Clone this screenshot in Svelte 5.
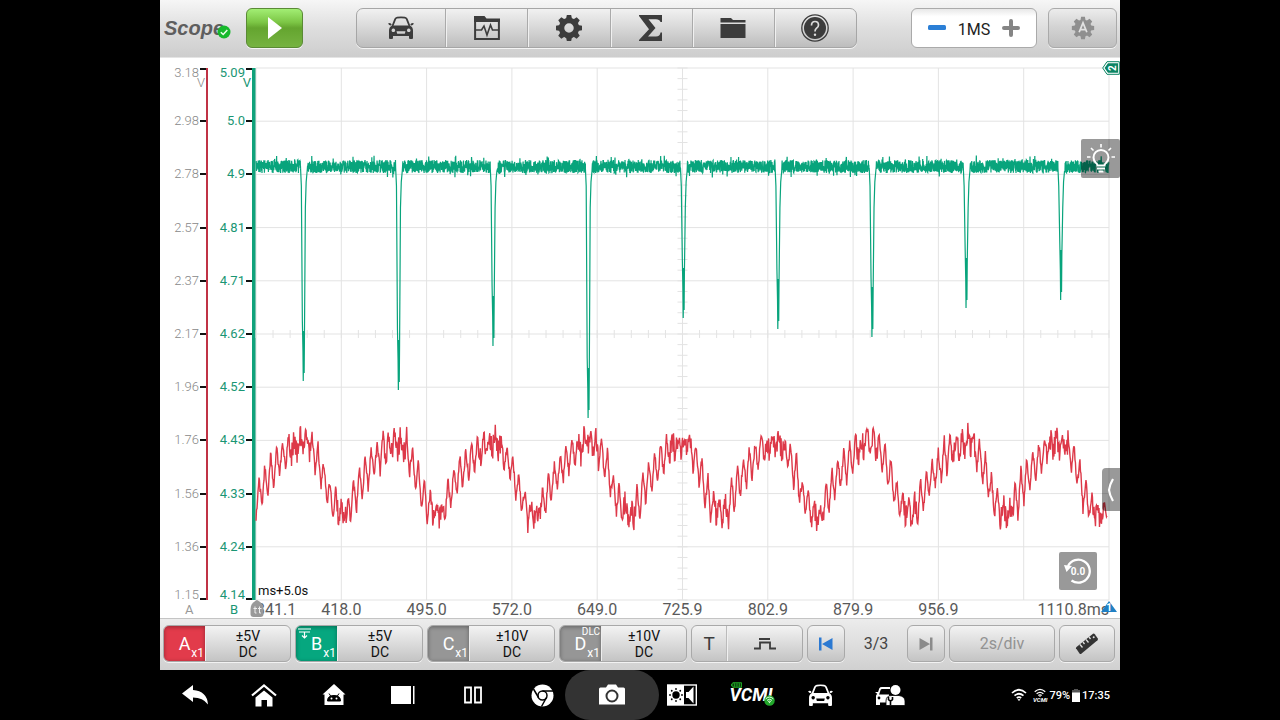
<script>
  const axisA = ['3.18', '2.98', '2.78', '2.57', '2.37', '2.17', '1.96', '1.76', '1.56', '1.36', '1.15'];
  const axisB = ['5.09', '5.0', '4.9', '4.81', '4.71', '4.62', '4.52', '4.43', '4.33', '4.24', '4.14'];
  const times = ['341.1', '418.0', '495.0', '572.0', '649.0', '725.9', '802.9', '879.9', '956.9', '1110.8ms'];
  const channels = [
    { name: 'A', range: '±5V', tone: 'red' },
    { name: 'B', range: '±5V', tone: 'green', filter: true },
    { name: 'C', range: '±10V', tone: 'gray' },
    { name: 'D', range: '±10V', tone: 'gray', tag: 'DLC' }
  ];
  const tools = ['Vehicle', 'Waveforms', 'Settings', 'Math', 'Files', 'Help'];
  const navItems = ['Back', 'Home', 'Android home', 'Recent apps', 'Split screen', 'Chrome', 'Screenshot', 'Display and sound', 'VCMI', 'Vehicle', 'Remote expert'];

  const W = 852;
  const H = 532;

  function random(seed) {
    let s = seed;
    return () => {
      s = (s * 1664525 + 1013904223) % 4294967296;
      return s / 4294967296;
    };
  }

  // Channel B: noisy supply level with a deep dip at every coil event.
  const dips = [[47.5, 313], [142.5, 322], [237, 278], [332, 350], [427, 250], [521.5, 261], [615.5, 269], [709.5, 240], [804, 232]];
  function supplyTrace() {
    const rnd = random(11);
    const pts = [];
    let next = 0;
    for (let x = 0; x <= W; x += 0.2) {
      const dip = dips[next];
      if (dip && x > dip[0] - 3) {
        const [c, d] = dip;
        pts.push([c - 3, 100], [c - 2.2, 118], [c - 1.2, d - 60], [c - 0.6, d - 30], [c - 0.3, d], [c + 0.2, d - 50], [c + 0.6, d - 8], [c + 0.9, d - 45], [c + 1.8, 140], [c + 2.6, 114], [c + 3.6, 103]);
        x = c + 4;
        next += 1;
      }
      const spread = rnd() < 0.05 ? 22 : 13;
      pts.push([x, 98.5 + (rnd() - 0.5) * spread]);
    }
    return pts;
  }

  // Channel A: slow ripple carrying a faster saw-like one.
  const troughs = [-8, 88, 181, 279, 374, 465, 561, 654, 751, 842, 938];
  const shape = [[0, 447], [0.06, 440], [0.13, 424], [0.21, 409], [0.32, 394], [0.43, 381], [0.54, 375], [0.62, 375], [0.69, 386], [0.77, 404], [0.84, 427], [0.92, 440], [1, 447]];
  function rippleTrace() {
    const rnd = random(5);
    const pts = [];
    let swing = 16;
    let cycle = -1;
    for (let x = 0; x <= 850; x += 0.5) {
      let i = 0;
      while (troughs[i + 1] <= x) i += 1;
      const p = (x - troughs[i]) / (troughs[i + 1] - troughs[i]);
      let k = 0;
      while (shape[k + 1][0] < p) k += 1;
      const [p0, y0] = shape[k];
      const [p1, y1] = shape[k + 1];
      const base = y0 + ((y1 - y0) * (p - p0)) / (p1 - p0);
      const flat = (p > 0.42 && p < 0.66) || p < 0.06 || p > 0.93;
      const phase = (x / 5.9) % 1;
      if (Math.floor(x / 5.9) !== cycle) {
        cycle = Math.floor(x / 5.9);
        swing = 14 + rnd() * 8;
      }
      const saw = phase < 0.5 ? 1 - phase * 4 : phase * 4 - 3;
      pts.push([x, base + saw * (flat ? 9 : swing) + (rnd() - 0.5) * (flat ? 23 : 9)]);
    }
    return pts;
  }

  const toPoints = (pts) => pts.map(([x, y]) => `${x.toFixed(2)},${y.toFixed(1)}`).join(' ');
  const greenPoints = toPoints(supplyTrace());
  const redPoints = toPoints(rippleTrace());

  const steps = Array.from({ length: 11 }, (_, i) => i);
  const minor = Array.from({ length: 51 }, (_, i) => i);
  const teeth = [0, 45, 90, 135, 180, 225, 270, 315];
</script>

{#snippet car()}
  <svg class="car" viewBox="0 0 26 23" aria-hidden="true">
    <path d="M4.5 10 7.2 3.2Q7.8 1.8 9.2 1.6 13 1 16.8 1.6 18.2 1.8 18.8 3.2L21.5 10" fill="none" stroke="currentColor" stroke-width="1.8" />
    <path d="M0 7.5Q2.5 6 3.7 8.5L2.8 9.5Q1 9.5 0 7.5zM26 7.5Q23.5 6 22.3 8.5L23.2 9.5Q25 9.5 26 7.5z" fill="currentColor" />
    <path fill="currentColor" fill-rule="evenodd" d="M4 9.5H22Q25 11 25 14.5V22Q25 23 24 23H22Q21 23 21 22V20H5V22Q5 23 4 23H2Q1 23 1 22V14.5Q1 11 4 9.5zM5.3 12.5a1.8 1.8 0 1 0 .1 0zM20.7 12.5a1.8 1.8 0 1 0 .1 0zM8.5 15.2 9.2 17.8H16.8L17.5 15.2z" />
  </svg>
{/snippet}

{#snippet gear()}
  {#each teeth as a}
    <path d="M-3-9 -2.2-13H2.2L3-9z" transform="rotate({a})" />
  {/each}
{/snippet}

{#snippet wifi()}
  <path d="M1 5Q8-1.5 15 5M3.5 7.7Q8 3.8 12.5 7.7M5.8 10Q8 8.3 10.2 10" fill="none" stroke="currentColor" stroke-width="1.7" />
  <path d="M6.5 11.5Q8 10.3 9.5 11.5L8 13z" fill="currentColor" />
{/snippet}

<div class="device">
  <header class="topbar">
    <div class="brand">
      <h1>Scope</h1>
      <svg class="ok" viewBox="0 0 14 14" aria-hidden="true"><circle cx="7" cy="7" r="6.5" fill="#16b92c" /><path d="M3.8 7.2 6.2 9.5 10.3 5" fill="none" stroke="#eaffea" stroke-width="1.5" /></svg>
    </div>
    <button class="play" aria-label="Run"><svg viewBox="0 0 14 22" aria-hidden="true"><path d="M0 0 14 11 0 22z" fill="#fff" /></svg></button>

    <div class="tools">
      {#each tools as tool, i}
        <button aria-label={tool}>
          {#if i === 0}
            {@render car()}
          {:else if i === 1}
            <svg width="26" height="26" viewBox="0 0 26 26" aria-hidden="true"><path d="M0 1H10.5L12.5 3.5H26V7H0z" fill="currentColor" /><path d="M1.100 5V23.900H24.900V5" fill="none" stroke="currentColor" stroke-width="2" /><path d="M2 15H7.5L10 11 13 20 16.5 10 18.5 15H24" fill="none" stroke="currentColor" stroke-width="1.6" /></svg>
          {:else if i === 2}
            <svg width="28" height="28" viewBox="-14 -14 28 28" fill="currentColor" aria-hidden="true"><circle r="7.5" fill="none" stroke="currentColor" stroke-width="5.5" />{@render gear()}</svg>
          {:else if i === 3}
            <svg width="24" height="26" viewBox="0 0 24 26" aria-hidden="true"><path d="M0 0H23V7H21.5Q20.5 4.300 17 4.300H9.5L16.5 13 9 21.5H17Q21 21.5 21.5 17.5H23V26H0V25L10 14.200 0 1z" fill="currentColor" /></svg>
          {:else if i === 4}
            <svg width="26" height="22" viewBox="0 0 26 22" aria-hidden="true"><path d="M.5 1H11L13 3H25.5V5.5H.5zM.5 7H25.5V21H.5z" fill="currentColor" /></svg>
          {:else}
            <svg width="28" height="28" viewBox="0 0 28 28" aria-hidden="true"><circle cx="14" cy="14" r="13.2" fill="none" stroke="currentColor" stroke-width="1.3" /><circle cx="14" cy="14" r="11" fill="currentColor" /><path d="M10.5 11.5Q10.5 7.5 14 7.5T17.5 11Q17.5 13 15.5 14.2 14 15.2 14 17.5" fill="none" stroke="#ddd" stroke-width="1.7" /><circle cx="14" cy="20.8" r="1.2" fill="#ddd" /></svg>
          {/if}
        </button>
      {/each}
    </div>

    <div class="samples">
      <button aria-label="Fewer samples"><svg width="18" height="6" viewBox="0 0 18 6" aria-hidden="true"><rect width="18" height="5" rx="1.5" fill="#2b7fd6" /></svg></button>
      <output>1MS</output>
      <button aria-label="More samples"><svg width="18" height="18" viewBox="0 0 18 18" aria-hidden="true"><path d="M9 2V16M2 9H16" stroke="#858585" stroke-width="4" stroke-linecap="round" /></svg></button>
    </div>
    <button class="auto" aria-label="Auto setup">
      <svg width="24" height="24" viewBox="-14 -14 28 28" aria-hidden="true"><g fill="#8f8f8f"><circle r="10" />{@render gear()}</g><path d="M-4.5 5 0-6 4.5 5M-3 2H3" fill="none" stroke="#e2e2e2" stroke-width="2" /></svg>
    </button>
  </header>

  <main class="scope">
    <div class="axis axis-a">
      {#each axisA as value, i}
        <div class="mark"><span>{value}</span><i></i>{#if i === 0}<b class="unit">V</b>{/if}</div>
      {/each}
    </div>
    <div class="axis axis-b">
      {#each axisB as value, i}
        <div class="mark"><span>{value}</span><i></i>{#if i === 0}<b class="unit">V</b>{/if}</div>
      {/each}
    </div>
    <div class="plot">
      <svg class="chart" viewBox="0 0 {W} {H}" preserveAspectRatio="none" role="img" aria-label="Waveforms of channels A and B">
        <g class="grid">
          {#each steps as n}
            <path d="M{n * 85.2} 0V{H}M0 {n * 53.2}H{W}" />
          {/each}
          {#each minor as n}
            <path d="M{n * 17.04} 262V270M421 {n * 10.64}H431" />
          {/each}
        </g>
        <polyline class="green" points={greenPoints} />
        <polyline class="red" points={redPoints} />
      </svg>
      <span class="offset">ms+5.0s</span>
      <svg class="level" viewBox="0 0 18 14" aria-hidden="true"><path d="M.7 7 5 .7H17.300V13.300H5z" fill="#fff" stroke="#0b8463" /><path d="M2.600 7 6 2.300H16V11.700H6z" fill="#0b8463" /><text class="badge" x="-7" y="14" transform="rotate(-90)">2</text></svg>
      <button class="overlay hint" aria-label="Tips">
        <svg width="30" height="30" viewBox="0 0 30 30" fill="none" stroke="#fff" stroke-width="2" aria-hidden="true"><path d="M11.5 21.5Q11.5 20 9.8 18.8A7.5 7.5 0 1 1 20.2 18.8Q18.5 20 18.5 21.5z" /><path d="M11 24.5H19M12.5 27.5H17.5" /><path d="M15 0V3.5M5 4 7.5 6.5M25 4 22.5 6.5M1 13H4.5M25.5 13H29" stroke-width="1.6" /></svg>
      </button>
      <button class="overlay drawer" aria-label="Open panel"><svg width="8" height="24" viewBox="0 0 8 24" aria-hidden="true"><path d="M6 1Q2.5 7 2 12 2.5 17 6 23" fill="none" stroke="#fff" stroke-width="2.2" /></svg></button>
      <button class="overlay reset" aria-label="Reset to zero">
        <svg width="30" height="30" viewBox="0 0 30 30" aria-hidden="true"><path d="M5 10A11.5 11.5 0 1 1 8.5 24.5" fill="none" stroke="#fff" stroke-width="2.3" /><path d="M1 9 9 10 3.500 16z" fill="#fff" /></svg>
        <span>0.0</span>
      </button>
    </div>
    <span class="foot foot-a">A</span>
    <span class="foot foot-b">B</span>
    <div class="times">
      {#each times as time}<span>{time}</span>{/each}
      <svg class="trigger" viewBox="0 0 14 17" aria-hidden="true"><path d="M7 0Q13.5 3 13.5 9V14Q13.5 17 10.5 17H3.5Q.5 17 .5 14V9Q.5 3 7 0z" fill="#999" /><path d="M3.5 8.5H7M8 8.5H11.5M5 6.5V13H6.5M9.5 6.5V13H11" fill="none" stroke="#eee" /></svg>
      <svg class="cursor" viewBox="0 0 16 12" aria-hidden="true"><path d="M8 0 16 11H0z" fill="#2080c4" /><text class="badge" x="8" y="10">1</text></svg>
    </div>
  </main>

  <section class="controls" aria-label="Channels">
    {#each channels as ch}
      <div class="channel">
        <button class="tile {ch.tone}" aria-label="Channel {ch.name}">
          {#if ch.filter}<svg class="filter" viewBox="0 0 13 11" fill="none" stroke="#fff" aria-hidden="true"><path d="M0 1H13M1 4H12M6.5 4V10M4 7.5 6.5 10 9 7.5" /></svg>{/if}
          {#if ch.tag}<small class="tag">{ch.tag}</small>{/if}
          <span class="name">{ch.name}</span><small class="probe">x1</small>
        </button>
        <button class="range"><span>{ch.range}</span><span>DC</span></button>
      </div>
    {/each}
    <div class="joined">
      <button class="t" aria-label="Trigger">T</button>
      <button aria-label="Trigger mode"><svg width="22" height="12" viewBox="0 0 22 12" aria-hidden="true"><path d="M0 10.5H6V4.5H16V10.5H22M5 1H16" fill="none" stroke="currentColor" stroke-width="1.8" /></svg></button>
    </div>
    <div class="pager">
      <button aria-label="Previous page"><svg width="14" height="14" viewBox="0 0 14 14" fill="#2b79d2" aria-hidden="true"><path d="M0 .5H2.5V13.5H0zM13.5 1V13L3 7z" /></svg></button>
      <span>3/3</span>
      <button aria-label="Next page"><svg width="14" height="14" viewBox="0 0 14 14" fill="#8b8b8b" aria-hidden="true"><path d="M11 .5H13.5V13.5H11zM.5 1V13L11 7z" /></svg></button>
    </div>
    <button class="div">2s/div</button>
    <button class="measure" aria-label="Measure"><svg width="24" height="22" viewBox="0 0 24 22" aria-hidden="true"><path d="M1.5 14 18 .8Q19 .2 19.8 1.2L22.8 5.5Q23.2 6.5 22.5 7.2L6 21Q5.2 21.2 4.7 20.7L1 15.2Q1 14.5 1.5 14z" fill="#333" /><path d="M5 11.5 7.500 14.500M8 9 9.500 11M11 6.5 13.500 9.500M14 4 15.500 6" stroke="#ddd" stroke-width="1.3" /><circle cx="18.7" cy="4.3" r="1" fill="#ddd" /></svg></button>
  </section>

  <footer class="nav">
    {#each navItems as item, i}
      <button class:active={i === 6} aria-label={item}>
        {#if i === 0}
          <svg width="26" height="20" viewBox="0 0 26 20" aria-hidden="true"><path d="M0 8.5 11 0V5Q25 6 26 19.5 21 12.5 11 12.5V17z" fill="#fff" /></svg>
        {:else if i === 1}
          <svg width="26" height="23" viewBox="0 0 26 23" aria-hidden="true"><path d="M1 11.5 13 1.5 25 11.5" fill="none" stroke="#fff" stroke-width="2.2" /><path d="M4.5 13.500 13 6.500 21.5 13.500V22.5H16V16H10.5V22.5H4.5z" fill="#fff" /></svg>
        {:else if i === 2}
          <svg width="24" height="22" viewBox="0 0 24 22" aria-hidden="true"><path d="M12 0 23.5 10.5H21.5V21H2.5V10.5H.5z" fill="#fff" /><path d="M5.5 17Q5.5 11.5 12 11.5T18.5 17zM7 9.5 9 12.5M17 9.5 15 12.5" fill="#000" stroke="#000" /><circle cx="9.5" cy="14.5" r="1" fill="#fff" /><circle cx="14.5" cy="14.5" r="1" fill="#fff" /></svg>
        {:else if i === 3}
          <svg width="24" height="20" viewBox="0 0 24 20" aria-hidden="true"><path d="M0 1H20V19H0zM22 1H23.5V19H22z" fill="#fff" /></svg>
        {:else if i === 4}
          <svg width="20" height="20" viewBox="0 0 20 20" aria-hidden="true"><path d="M2 2.5H8V17.5H2zM12 2.5H18V17.5H12z" fill="none" stroke="#fff" stroke-width="1.8" /></svg>
        {:else if i === 5}
          <svg width="23" height="23" viewBox="0 0 23 23" aria-hidden="true"><circle cx="11.5" cy="11.5" r="11" fill="#fff" /><circle cx="11.5" cy="11.5" r="4.5" fill="#fff" stroke="#000" stroke-width="1.5" /><path d="M11.5 7H22M7.5 13.5 2.5 5M15.5 13.5 10.5 22.5" stroke="#000" stroke-width="1.5" /></svg>
        {:else if i === 6}
          <svg width="26" height="22" viewBox="0 0 26 22" aria-hidden="true"><path d="M1.5 3.5H7L9 .5H17L19 3.5H24.5Q26 3.5 26 5V20.5H0V5Q0 3.5 1.5 3.5z" fill="#fff" /><circle cx="13" cy="12" r="5.5" fill="#fff" stroke="#333" stroke-width="2" /></svg>
        {:else if i === 7}
          <svg width="30" height="22" viewBox="0 0 30 22" aria-hidden="true"><rect x=".7" y="1" width="28.6" height="20" fill="none" stroke="#fff" stroke-width="1.4" /><path d="M1 1H17V21H1z" fill="#fff" /><circle cx="9" cy="11" r="3.7" fill="#000" />{#each teeth as a}<circle cx="9" cy="5" r=".9" fill="#000" transform="rotate({a} 9 11)" />{/each}<path d="M19 8H21.5L26.5 2.5V19.5L21.5 14H19z" fill="#fff" /></svg>
        {:else if i === 8}
          <span class="vcmi"><em>VCMI</em>
            <svg class="cell" viewBox="0 0 12 6" aria-hidden="true"><path d="M.5 2H2V.5H11.5V5.5H2V4H.5z" fill="#0a3a0c" stroke="#22b32b" /><path d="M4 1V5M6.5 1V5M9 1V5" stroke="#22b32b" /></svg>
            <svg class="link" viewBox="-2 -2 20 20" aria-hidden="true"><circle cx="8" cy="8" r="9.5" fill="#22a82b" />{@render wifi()}</svg>
          </span>
        {:else if i === 9}
          {@render car()}
        {:else}
          <svg width="30" height="22" viewBox="0 0 30 22" aria-hidden="true"><path d="M3 11 5 5Q5.5 4 7 4H15" fill="none" stroke="#fff" stroke-width="1.8" /><path d="M0 8H3V10.5H14V21H11V18.5H5V21H1V12Q1 10.5 2.5 10z" fill="#fff" /><circle cx="4" cy="14" r="1.4" /><circle cx="20.5" cy="6" r="5" fill="#fff" /><path d="M11 21.5V17Q11 11.5 17 11.5H24Q30 12.5 30 17V21.5z" fill="#fff" stroke="#000" stroke-width=".8" /><path d="M15.5 21V17.5M13.5 13V15.5Q15.5 18 17.5 15.5V13" fill="none" stroke="#000" stroke-width="1.6" /></svg>
        {/if}
      </button>
    {/each}
    <div class="status">
      <svg width="16" height="14" viewBox="0 0 16 14" aria-hidden="true">{@render wifi()}</svg>
      <span class="linkstate"><svg width="12" height="9" viewBox="0 0 16 12" aria-hidden="true">{@render wifi()}</svg><em>VCMI</em></span>
      <span>79%</span>
      <svg width="8" height="13" viewBox="0 0 8 13" aria-hidden="true"><path d="M2 0H6V1H8V4H0V1H2z" fill="#555" /><path d="M0 3.5H8V13H0z" fill="#fff" /></svg>
      <time>17:35</time>
    </div>
  </footer>
</div>

<style>
  :global(body) { background: #000; }
  .device {
    width: 75%;
    min-height: 100vh;
    margin: 0 auto;
    display: flex;
    flex-direction: column;
    background: #fff;
    font-family: Roboto, "Liberation Sans", sans-serif;
    color: #222;
  }
  .device * { box-sizing: border-box; }
  svg { display: block; flex: none; }
  button {
    display: flex;
    align-items: center;
    justify-content: center;
    margin: 0;
    padding: 0;
    border: 0;
    background: none;
    color: #3c3c3c;
    font: inherit;
  }
  .car { width: 26px; height: 23px; }

  .topbar {
    display: flex;
    align-items: center;
    height: 58px;
    padding: 0 3px 2px 4px;
    background: linear-gradient(#f6f6f6, #dedede 50%, #cdcdcd);
    border-bottom: 1px solid #e4e4e4;
  }
  .brand { position: relative; width: 82px; }
  h1 { margin: 0; font: italic bold 20px/24px "Liberation Sans", sans-serif; color: #5e5e5e; }
  .ok { position: absolute; left: 53px; top: 9px; width: 14px; height: 14px; }
  .play {
    width: 57px;
    height: 40px;
    border: 1px solid #5a8a35;
    border-radius: 6px;
    background: linear-gradient(#a2ee74, #7cc645 35%, #64a52f 50%, #76b341);
    box-shadow: 0 1px #f4f4f4;
  }
  .play svg { width: 14px; height: 22px; }
  .tools {
    flex: 1;
    display: grid;
    grid-template-columns: 88fr repeat(5, 82fr);
    height: 40px;
    margin: 0 54px 0 53px;
    border: 1px solid #a6a6a6;
    border-radius: 7px;
    background: linear-gradient(#f1f1f1, #dadada 45%, #bdbdbd);
    box-shadow: 0 1px #f4f4f4;
  }
  .tools button + button { border-left: 1px solid #aaa; box-shadow: inset 1px 0 #f0f0f0; }
  .samples {
    display: flex;
    align-items: center;
    justify-content: space-between;
    width: 126px;
    height: 40px;
    padding: 0 16px;
    border: 1px solid #aaa;
    border-radius: 6px;
    background: linear-gradient(#e8e8e8, #fff 20%);
  }
  output { padding-top: 3px; font-size: 16px; color: #222; }
  .auto {
    width: 69px;
    height: 40px;
    margin-left: 11px;
    border: 1px solid #aaa;
    border-radius: 6px;
    background: linear-gradient(#ececec, #d4d4d4 45%, #bfbfbf);
    box-shadow: 0 1px #f4f4f4;
  }

  .scope {
    flex: 1;
    display: grid;
    grid-template-columns: 48px 48px 1fr;
    grid-template-rows: 1fr 18px;
    padding: 10px 11px 0 0;
  }
  .axis { display: flex; flex-direction: column; font-size: 13px; line-height: 10px; }
  .axis-a { color: #888; font-weight: 300; border-right: 2px solid #c03345; }
  .axis-b { color: #1a9674; border-right: 4px solid #10a27b; }
  .mark { position: relative; flex: 2; display: flex; align-items: center; justify-content: flex-end; gap: 1px; }
  .mark:first-child { flex: 1; align-items: flex-start; }
  .mark:last-child { flex: 1; align-items: flex-end; }
  .mark i { width: 6px; height: 2px; background: #111; }
  .unit { position: absolute; top: 10px; right: 1px; font-weight: inherit; }
  .plot { position: relative; min-height: 300px; }
  .chart { position: absolute; width: 100%; height: 100%; overflow: visible; }
  .chart path, .chart polyline { fill: none; vector-effect: non-scaling-stroke; }
  .grid { stroke: #e3e3e3; }
  .green { stroke: #08a47c; stroke-width: 1.2px; }
  .red { stroke: #dd3949; stroke-width: 1.4px; }
  .offset { position: absolute; left: 2px; bottom: 2px; font-size: 13px; line-height: 14px; color: #111; }
  .level { position: absolute; right: -11px; top: -7px; width: 18px; height: 14px; }
  .badge { fill: #fff; font-size: 10px; font-weight: 700; text-anchor: middle; }
  .overlay { position: absolute; background: rgba(0, 0, 0, 0.4); border-radius: 2px; }
  .hint { right: -11px; top: 13.4%; width: 39px; height: 39px; }
  .drawer { right: -11px; top: 75.2%; width: 18px; height: 43px; border-radius: 4px 0 0 4px; }
  .reset { right: 12px; bottom: 10px; width: 38px; height: 38px; color: #fff; }
  .reset span { position: absolute; font-size: 10px; font-weight: 700; }
  .foot { font-size: 13px; line-height: 20px; }
  .foot-a { padding-left: 25px; color: #999; }
  .foot-b { padding-left: 22px; color: #1a9674; }
  .times { position: relative; display: flex; font-size: 16px; line-height: 20px; color: #5a5a5a; }
  .times span { flex: 2 1 0; text-align: center; }
  .times span:first-child { flex: 1 1 0; text-align: left; }
  .times span:nth-child(10) { flex: 3 1 0; text-align: right; }
  .trigger { position: absolute; left: -6px; top: 0; width: 14px; height: 17px; }
  .cursor { position: absolute; right: -8px; top: 1px; width: 16px; height: 12px; }

  .controls {
    display: grid;
    grid-template-columns: repeat(4, 128fr) 112fr 138fr 106fr 56fr;
    gap: 4px;
    height: 52px;
    padding: 6px 5px 8px 3px;
    border-top: 1px solid #c4c4c4;
    background: linear-gradient(#ececec, #d0d0d0);
  }
  .channel, .joined, .pager button, .div, .measure {
    border: 1px solid #a9a9a9;
    border-radius: 6px;
    background: linear-gradient(#f3f3f3, #d9d9d9 55%, #c4c4c4);
    box-shadow: 0 1px #f2f2f2;
    overflow: hidden;
  }
  .channel { display: grid; grid-template-columns: 42px 1fr; }
  .tile { position: relative; color: #fff; box-shadow: inset 0 1px 4px rgba(0, 0, 0, 0.35); border-right: 1px solid #eee; }
  .tile.red { background: #e23b4b; }
  .tile.green { background: #06a77f; }
  .tile.gray { background: #969696; }
  .name { font-size: 18px; line-height: 16px; }
  .probe, .tag, .filter { position: absolute; }
  .probe { right: 1px; bottom: 1px; font-size: 12px; line-height: 13px; }
  .tag { right: 1px; top: 1px; font-size: 10px; line-height: 9px; }
  .filter { left: 2px; top: 2px; width: 13px; height: 11px; }
  .range { flex-direction: column; font-size: 14px; line-height: 16px; color: #111; }
  .joined { display: grid; grid-template-columns: 35fr 77fr; }
  .joined button + button { border-left: 1px solid #bbb; box-shadow: inset 1px 0 #f0f0f0; }
  .t { font-size: 19px; }
  .pager { display: grid; grid-template-columns: 38fr 62fr 38fr; align-items: stretch; }
  .pager span { align-self: center; text-align: center; font-size: 16px; color: #444; }
  .div { font-size: 16px; color: #929292; }

  .nav {
    display: grid;
    grid-template-columns: repeat(11, 1fr) 195px;
    height: 50px;
    background: #000;
    overflow: hidden;
  }
  .nav button { position: relative; color: #fff; }
  .nav svg { position: relative; }
  .active::before { content: ""; position: absolute; inset: 0 -12px; border-radius: 25px; background: #333; }
  .nav .car { width: 25px; height: 22px; }
  .vcmi { position: relative; font-size: 18px; line-height: 20px; font-weight: 700; }
  .nav .cell { position: absolute; left: 1px; top: -3px; width: 11px; height: 6px; }
  .nav .link { position: absolute; right: -2px; bottom: -1px; width: 11px; height: 11px; }
  .status { display: flex; align-items: center; justify-content: flex-end; gap: 2px; padding-right: 10px; color: #fff; font-size: 11px; font-weight: 500; }
  .linkstate { display: flex; flex-direction: column; align-items: center; margin-left: 4px; font-size: 6px; line-height: 6px; font-weight: 700; }
</style>
